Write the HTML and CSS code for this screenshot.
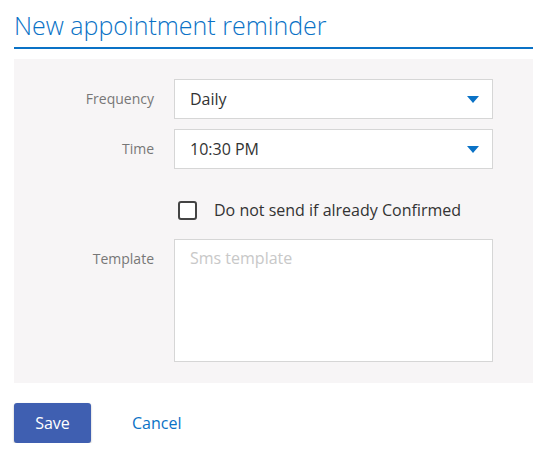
FILE: index.html
```html
<!DOCTYPE html>
<html>
<head>
<meta charset="utf-8">
<link rel="stylesheet" href="styles.css">
</head>
<body>
<div class="page">
  <h1 class="title">New appointment reminder</h1>
  <div class="panel">
    <div class="row">
      <div class="label">Frequency</div>
      <div class="select"><span>Daily</span><span class="arrow"></span></div>
    </div>
    <div class="row">
      <div class="label">Time</div>
      <div class="select"><span>10:30 PM</span><span class="arrow"></span></div>
    </div>
    <div class="row check-row">
      <div class="label"></div>
      <div class="check"><span class="box"></span><span class="check-text">Do not send if already Confirmed</span></div>
    </div>
    <div class="row template-row">
      <div class="label">Template</div>
      <div class="textarea"><span class="placeholder">Sms template</span></div>
    </div>
  </div>
  <div class="actions">
    <button class="save">Save</button>
    <a class="cancel">Cancel</a>
  </div>
</div>
</body>
</html>
```
FILE: styles.css
```css
html, body { margin: 0; padding: 0; background: #fff; }
body { font-family: "Open Sans", "Liberation Sans", sans-serif; }
.page { padding: 0 18px 0 14px; }
.title {
  margin: 0;
  padding-top: 8px;
  height: 39px;
  font-size: 25px;
  font-weight: 300;
  color: #0a72c6;
  line-height: 34px;
  border-bottom: 2px solid #0a72c6;
}
.panel {
  margin-top: 10px;
  background: #f7f5f6;
  padding: 20px 40px 21px 0;
  display: flex;
  flex-direction: column;
}
.row { display: flex; align-items: flex-start; margin-bottom: 10px; }
.label {
  width: 140px;
  margin-right: 20px;
  text-align: right;
  font-size: 14px;
  color: #777;
  line-height: 40px;
  flex: none;
}
.select {
  flex: 1;
  height: 38px;
  background: #fff;
  border: 1px solid #d6d6d6;
  display: flex;
  align-items: center;
  justify-content: space-between;
  padding: 0 13px 0 15px;
  font-size: 16px;
  color: #333;
}
.arrow {
  width: 0; height: 0;
  border-left: 6px solid transparent;
  border-right: 6px solid transparent;
  border-top: 7px solid #0a72c6;
}
.check-row { margin-top: 21px; margin-bottom: 19px; }
.check { display: flex; align-items: center; height: 20px; padding-left: 4px; }
.box {
  width: 15px; height: 15px;
  border: 2px solid #444;
  border-radius: 3px;
  background: #fff;
  margin-right: 17px;
}
.check-text { font-size: 16px; color: #333; }
.template-row { margin-bottom: 0; }
.textarea {
  flex: 1;
  height: 107px;
  background: #fff;
  border: 1px solid #d6d6d6;
  padding: 7px 15px;
  font-size: 16px;
}
.placeholder { color: #c8c8c8; }
.actions { display: flex; align-items: center; margin-top: 20px; }
.save {
  width: 77px; height: 40px;
  background: #3f5fb1;
  color: #fff;
  border: none;
  border-radius: 3px;
  font-family: "Open Sans", "Liberation Sans", sans-serif;
  font-size: 16px;
  box-shadow: 0 1px 2px rgba(0,0,0,0.3);
}
.cancel { margin-left: 41px; font-size: 16px; color: #0a72c6; }
```
